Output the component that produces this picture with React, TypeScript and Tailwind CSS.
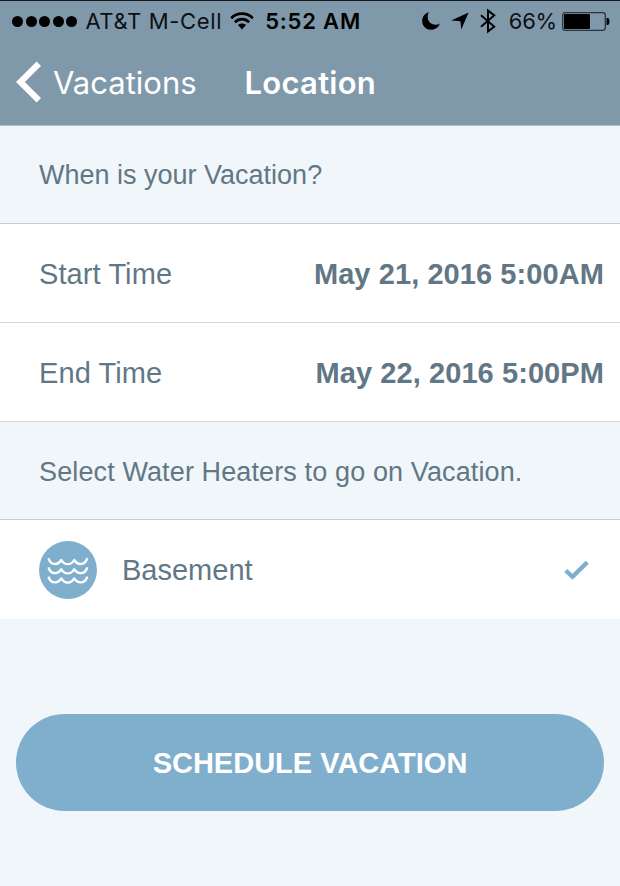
import React from 'react';

const WifiIcon = () => (
  <svg className="w-6 h-[18px] shrink-0" viewBox="0 0 24 18" fill="none" stroke="#000" strokeWidth="2.7">
    <path d="M1.2 6.2C7 .2 17 .2 22.8 6.2" />
    <path d="M4.9 10.2C9 6.2 15 6.2 19.1 10.2" />
    <path d="M8 12.9C10.2 10.9 13.8 10.9 16 12.9L12 17.4Z" fill="#000" stroke="none" />
  </svg>
);

const MoonIcon = () => (
  <svg className="w-[18px] h-[18px] shrink-0" viewBox="0 0 18 18">
    <path d="M6.8.2C2.6 1.5.2 4.9.2 9c0 5 3.8 8.800 8.800 8.800 4.200 0 7.700-2.500 8.900-6.300-1.300.8-2.700 1.200-4.200 1.200C9.300 12.700 6 9.700 5.700 5.500 5.600 3.600 6 1.800 6.800.2Z" />
  </svg>
);

const LocationArrowIcon = () => (
  <svg className="w-[18px] h-[18px] shrink-0" viewBox="0 0 18 18">
    <path d="M17.6.4L10.3 17.5 9.4 9.2.2 8.600Z" />
  </svg>
);

const BluetoothIcon = () => (
  <svg className="w-4 h-[26px] shrink-0" viewBox="0 0 16 26" fill="none" stroke="#000" strokeWidth="2">
    <path d="M1 7.2L14.2 18.600 8 23.500V2.500L14.200 7.400 1 18.800" />
  </svg>
);

const BatteryIcon = () => (
  <svg className="w-12 h-[19px] shrink-0" viewBox="0 0 48 19">
    <rect x=".7" y=".7" width="42.6" height="17.6" rx="2.5" fill="none" stroke="#2a343c" strokeWidth="1.3" />
    <rect x="2" y="2" width="26" height="15" rx="1" />
    <path d="M44.5 6h1c1.3 0 2 1.6 2 3.500s-.7 3.500-2 3.500h-1Z" />
  </svg>
);

const WavesIcon = () => (
  <svg className="w-[58px] h-[58px] shrink-0" viewBox="0 0 58 58" fill="none" stroke="#fff" strokeWidth="2.3">
    <circle cx="29" cy="29" r="29" fill="#80aecd" stroke="none" />
    {[0, 9.2, 18.4].map((y) => (
      <path
        key={y}
        transform={`translate(0 ${y})`}
        strokeLinejoin="round"
        d="M9.5 17.2C11.500 24.300 18.500 24.800 22.300 19C25.500 24.600 32 24.600 35.200 19C39 24.800 46.200 24.300 48.300 17.200"
      />
    ))}
  </svg>
);

const StatusBar = () => (
  <div className="flex items-center h-10 pl-3 pr-[10px] text-[22px] leading-none text-[#0c1014]">
    <div className="flex gap-[2.6px]">
      {[0, 1, 2, 3, 4].map((dot) => (
        <span key={dot} className="w-[11px] h-[11px] rounded-full bg-black" />
      ))}
    </div>
    <span className="ml-2 whitespace-nowrap tracking-[0.65px]">AT&amp;T M-Cell</span>
    <div className="ml-2 flex">
      <WifiIcon />
    </div>
    <span className="ml-[11px] font-semibold whitespace-nowrap text-black tracking-[0.8px]">5:52 AM</span>
    <div className="ml-auto flex items-center">
      <MoonIcon />
      <div className="ml-[11px] flex">
        <LocationArrowIcon />
      </div>
      <div className="ml-[11px] flex">
        <BluetoothIcon />
      </div>
      <span className="ml-[13px] whitespace-nowrap tracking-[-0.2px]">66%</span>
      <div className="ml-[5px] flex">
        <BatteryIcon />
      </div>
    </div>
  </div>
);

const TimeRow: React.FC<{ label: string; value: string }> = ({ label, value }) => (
  <div className="flex items-center justify-between h-[99px] pt-0.5 pl-[39px] pr-4 bg-white border-b border-[#d5d8da]">
    <span className="tracking-[0.1px]">{label}</span>
    <span className="font-bold tracking-[0.08px]">{value}</span>
  </div>
);

const App: React.FC = () => {
  return (
    <div className="w-full h-[886px] overflow-hidden bg-[#f0f6f9] text-[29px] leading-none text-[#627786] font-['Liberation_Sans',Arial,sans-serif]">
      <header className="h-[126px] border-t border-t-[#15181d] border-b border-b-[#b5bcc3] bg-[#7f99aa] font-[Inter,sans-serif]">
        <StatusBar />
        <nav className="flex items-center h-[82px] pl-4 text-[31px] text-white">
          <svg className="w-[25px] h-[42px] shrink-0" viewBox="0 0 25 42" fill="none" stroke="#fff" strokeWidth="6.2">
            <path d="M22.8 2.800L4.400 21l18.400 18.200" />
          </svg>
          <span className="ml-3">Vacations</span>
          <h1 className="ml-12 font-semibold tracking-[0.25px]">Location</h1>
        </nav>
      </header>

      <div className="flex items-center h-[98px] pt-0.5 pl-[39px] border-b border-[#c9cdd0] text-[27px]">
        When is your Vacation?
      </div>
      <TimeRow label="Start Time" value="May 21, 2016 5:00AM" />
      <TimeRow label="End Time" value="May 22, 2016 5:00PM" />
      <div className="flex items-center h-[98px] pt-[3px] pl-[39px] border-b border-[#c9cdd0] text-[27px] tracking-[0.12px]">
        Select Water Heaters to go on Vacation.
      </div>

      <div className="flex items-center h-[99px] pl-[39px] pr-[31px] bg-white">
        <WavesIcon />
        <span className="ml-[25px] pt-0.5">Basement</span>
        <svg className="w-[25px] h-5 ml-auto" viewBox="0 0 25 20" fill="none" stroke="#80aecd" strokeWidth="4.4">
          <path d="M1.7 10.500L8.500 16.800 23.300 2.200" />
        </svg>
      </div>

      <div className="px-4 pt-[95px]">
        <button type="button" className="w-full h-[97px] pt-px rounded-full bg-[#80aecd] text-white font-bold">
          SCHEDULE VACATION
        </button>
      </div>
    </div>
  );
};

export default App;
